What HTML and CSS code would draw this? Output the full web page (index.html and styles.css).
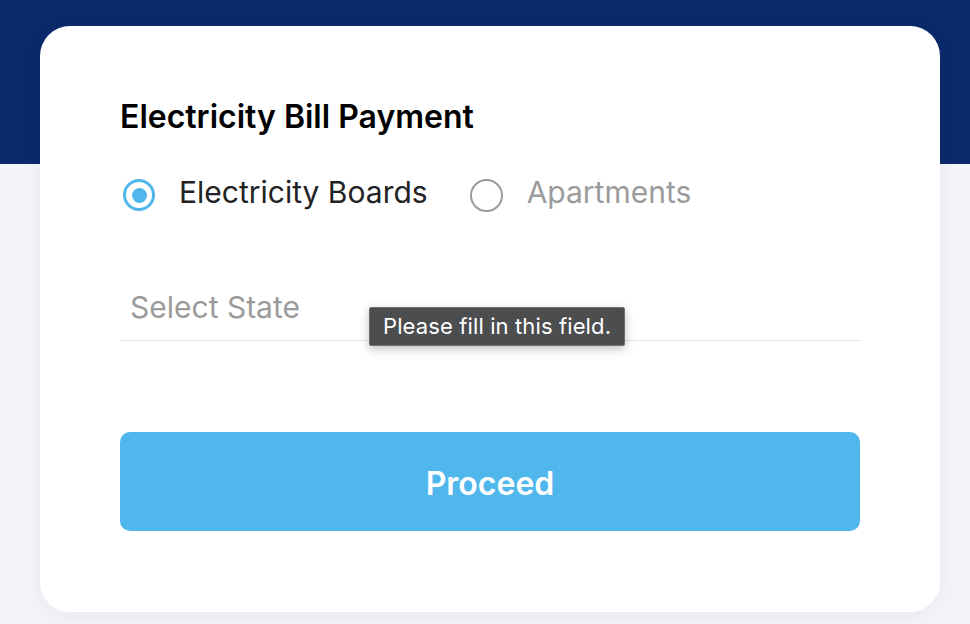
FILE: index.html
```html
<!DOCTYPE html>
<html lang="en">
<head>
<meta charset="utf-8">
<title>Electricity Bill Payment</title>
<link rel="stylesheet" href="styles.css">
</head>
<body>
<div class="page">
  <div class="card">
    <h1 class="title">Electricity Bill Payment</h1>
    <div class="radios">
      <label class="radio-opt checked">
        <span class="radio"><span class="dot"></span></span>
        <span class="radio-label">Electricity Boards</span>
      </label>
      <label class="radio-opt">
        <span class="radio"></span>
        <span class="radio-label">Apartments</span>
      </label>
    </div>
    <div class="field">
      <input class="state-input" type="text" placeholder="Select State">
      <div class="tooltip">Please fill in this field.</div>
    </div>
    <button class="proceed" type="button">Proceed</button>
  </div>
</div>
</body>
</html>
```

FILE: styles.css
```css
* { box-sizing: border-box; }
html, body { margin: 0; padding: 0; }
body {
  font-family: Inter, "Noto Sans", sans-serif;
  background: linear-gradient(to bottom, #0b2a6b 0, #0b2a6b 164px, #f4f5f9 164px, #f4f5f9 100%);
  min-height: 624px;
  overflow: hidden;
}
.page {
  padding: 26px 30px 0 40px;
}
.card {
  width: 900px;
  height: 586px;
  background: #fff;
  border-radius: 30px;
  box-shadow: 0 4px 24px rgba(20, 30, 60, 0.06);
  padding: 74px 80px 81px;
  display: flex;
  flex-direction: column;
}
.title {
  margin: 0;
  height: 34px;
  line-height: 34px;
  font-size: 32px;
  font-weight: 600;
  color: #000;
}
.radios {
  margin-top: 41px;
  height: 40px;
  display: flex;
  align-items: center;
}
.radio-opt {
  display: flex;
  align-items: center;
}
.radio-opt + .radio-opt { margin-left: 42px; }
.radio {
  width: 33px;
  height: 33px;
  border-radius: 50%;
  border: 2px solid #9b9b9b;
  display: flex;
  align-items: center;
  justify-content: center;
}
.checked .radio {
  width: 32px;
  height: 32px;
  border: 3px solid #4fb7ec;
  margin-left: 3px;
}
.dot {
  width: 15px;
  height: 15px;
  border-radius: 50%;
  background: #4fb7ec;
}
.radio-label {
  margin-left: 24px;
  padding-bottom: 7px;
  font-size: 30px;
  color: #9b9b9b;
}
.checked .radio-label { color: #222; }
.field {
  position: relative;
  margin-top: 70px;
}
.state-input {
  display: block;
  width: 100%;
  height: 56px;
  padding: 0 10px 12px;
  border: 0;
  border-bottom: 1px solid #e6e6e6;
  font-family: Inter, "Noto Sans", sans-serif;
  font-size: 30px;
  color: #222;
  outline: none;
  background: transparent;
}
.state-input::placeholder { color: #9b9b9b; }
.tooltip {
  position: absolute;
  left: 249px;
  top: 22px;
  height: 39px;
  line-height: 37px;
  padding: 0 13px;
  background: #4c4d4f;
  border: 1px solid #707070;
  border-radius: 2px;
  color: #fff;
  font-size: 22px;
  letter-spacing: 0.12px;
  white-space: nowrap;
  box-shadow: 0 3px 10px rgba(0, 0, 0, 0.25);
}
.proceed {
  margin-top: 91px;
  height: 99px;
  width: 100%;
  padding-top: 4px;
  border: 0;
  border-radius: 10px;
  background: #4fb7ec;
  color: #fff;
  font-family: Inter, "Noto Sans", sans-serif;
  font-size: 32px;
  font-weight: 600;
  cursor: pointer;
}
```
